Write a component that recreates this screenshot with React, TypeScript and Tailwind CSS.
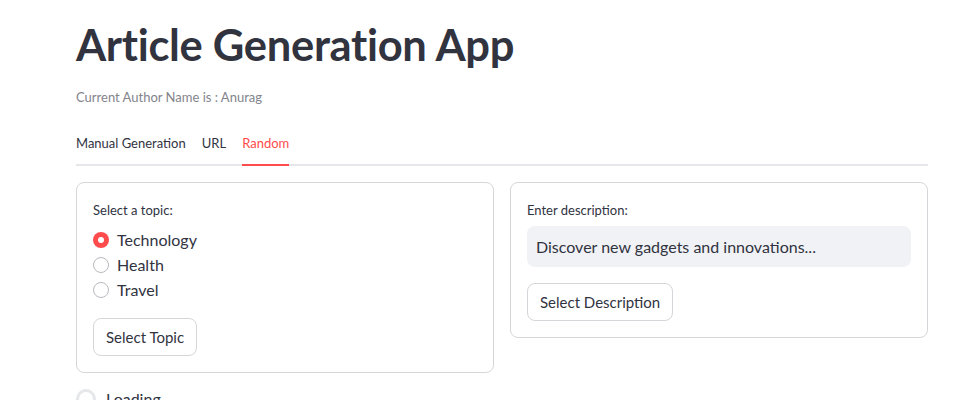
import React from 'react';

const font = { fontFamily: 'Lato, "Noto Sans", sans-serif' };

const Radio = ({ label, checked }: { label: string; checked?: boolean }) => (
  <div className="flex items-center h-[25px]">
    {checked ? (
      <span className="w-4 h-4 rounded-full bg-[#ff4b4b] flex items-center justify-center">
        <span className="w-[6px] h-[6px] rounded-full bg-white" />
      </span>
    ) : (
      <span className="w-4 h-4 rounded-full border border-[#b9bac0] bg-white" />
    )}
    <span className="ml-2 text-[16px] text-[#31333f]">{label}</span>
  </div>
);

const Btn = ({ children }: { children: React.ReactNode }) => (
  <button className="h-[38px] px-3 rounded-lg border border-[#d5d6da] bg-white text-[15px] text-[#31333f]">
    {children}
  </button>
);

export default function App() {
  return (
    <div className="w-[960px] h-[400px] overflow-hidden bg-white" style={font}>
      <div className="ml-[76px] w-[852px]">
        <h1 className="pt-[18px] text-[43.5px] leading-[53px] font-bold text-[#31333f] tracking-[-0.3px]">
          Article Generation App
        </h1>
        <p className="mt-[17px] text-[13px] text-[#83848c]">Current Author Name is : Anurag</p>

        <div className="mt-[16px] flex gap-4 border-b-2 border-[#e6e7ea] h-[42px]">
          <div className="flex items-center text-[13px] text-[#31333f]">Manual Generation</div>
          <div className="flex items-center text-[13px] text-[#31333f]">URL</div>
          <div className="flex items-center text-[13px] text-[#ff4b4b] border-b-2 border-[#ff4b4b] -mb-[2px]">Random</div>
        </div>

        <div className="mt-[16px] flex gap-4 items-start">
          <div className="flex-1 border border-[#d5d6da] rounded-lg px-4 pt-[18px] pb-4">
            <div className="text-[13px] text-[#31333f]">Select a topic:</div>
            <div className="mt-[7px] flex flex-col">
              <Radio label="Technology" checked />
              <Radio label="Health" />
              <Radio label="Travel" />
            </div>
            <div className="mt-[16px]">
              <Btn>Select Topic</Btn>
            </div>
          </div>
          <div className="flex-1 border border-[#d5d6da] rounded-lg px-4 pt-[18px] pb-4">
            <div className="text-[13px] text-[#31333f]">Enter description:</div>
            <div className="mt-[6px] h-[41px] rounded-lg bg-[#f0f2f6] px-[9px] flex items-center text-[16px] text-[#31333f]">
              Discover new gadgets and innovations...
            </div>
            <div className="mt-[16px]">
              <Btn>Select Description</Btn>
            </div>
          </div>
        </div>

        <div className="mt-[14px] flex items-center gap-[10px]">
          <span className="w-5 h-5 rounded-full border-[3px] border-[#e6e7ea]" />
          <span className="text-[16px] text-[#31333f]">Loading...</span>
        </div>
      </div>
    </div>
  );
}
